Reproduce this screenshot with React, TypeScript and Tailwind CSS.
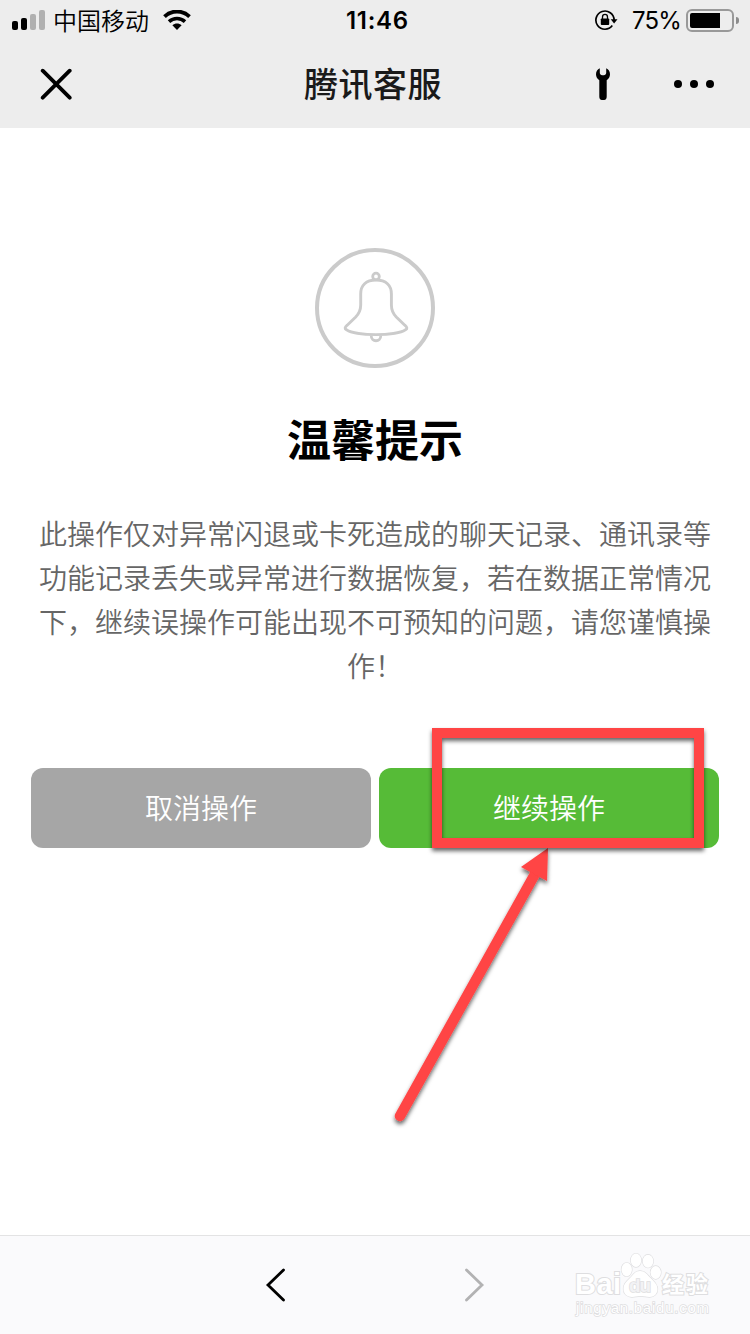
import React from 'react';

const SIGNAL_BARS = [
  { height: 'h-[9px]', color: 'bg-black' },
  { height: 'h-3', color: 'bg-black' },
  { height: 'h-4', color: 'bg-[#b0b0b0]' },
  { height: 'h-5', color: 'bg-[#b0b0b0]' },
];

const WifiIcon: React.FC = () => (
  <svg className="ml-3.5 h-5 w-7" viewBox="0 0 28 20" fill="none">
    <path d="M1.5 6.6C8.4-.2 19.6-.2 26.5 6.6" stroke="#000" strokeWidth="3.8" />
    <path d="M6 11.6c4.5-4.1 11.5-4.1 16 0" stroke="#000" strokeWidth="3.6" />
    <path d="M9.4 15.3c2.6-2.5 6.6-2.5 9.2 0L14 20z" fill="#000" />
  </svg>
);

const RotationLockIcon: React.FC = () => (
  <svg className="h-[22px] w-6" viewBox="0 0 24 22">
    <path d="M18.3 16.6A9.1 9.1 0 1 1 20.1 11" fill="none" stroke="#000" strokeWidth="1.7" />
    <path d="M16.7 10.2h6.8L20.1 14.4z" fill="#000" />
    <path d="M8.5 10V8a2.5 2.6 0 0 1 5 0v2" fill="none" stroke="#000" strokeWidth="1.3" />
    <rect x="6.8" y="9.4" width="8.4" height="6.500" rx="0.9" fill="#000" />
  </svg>
);

const StatusBar: React.FC = () => (
  <div className="flex h-10 items-center text-black">
    <div className="flex w-[346px] items-center pl-3">
      <div className="flex h-5 items-end gap-[3px]">
        {SIGNAL_BARS.map((bar) => (
          <span key={bar.height} className={`w-1.5 rounded-[2px] ${bar.height} ${bar.color}`} />
        ))}
      </div>
      <span className="ml-2 text-2xl font-[350] leading-10">中国移动</span>
      <WifiIcon />
    </div>
    <span className="w-[248px] pt-px font-['Inter'] text-[24px] font-semibold leading-10 tracking-[0.7px]">11:46</span>
    <RotationLockIcon />
    <span className="ml-3.5 w-[54px] whitespace-nowrap pt-px font-['Inter'] text-[24px] leading-10 tracking-[-0.9px]">
      75%
    </span>
    <div className="flex h-[23px] w-12 items-center rounded-[6px] border-2 border-[#999] pl-0.5">
      <div className="h-[15px] w-[30px] rounded-l-[2px] bg-black" />
    </div>
    <div className="ml-0.5 h-[7px] w-[3px] rounded-r-full bg-[#8c8c8c]" />
  </div>
);

const NavBar: React.FC = () => (
  <div className="flex h-[88px] items-center">
    <div className="w-[304px] pl-10">
      <svg className="h-8 w-8" viewBox="0 0 32 32" stroke="#000" strokeWidth="3.800" strokeLinecap="round">
        <path d="M2.700 2.700l27 27M29.700 2.700L2.700 29.700" />
      </svg>
    </div>
    <h1 className="w-[291px] pb-0.5 text-[34px] font-medium leading-[44px] tracking-[0.5px] text-[#1a1a1a]">腾讯客服</h1>
    <svg className="h-8 w-4" viewBox="0 0 16 32">
      <path
        d="M4.800.2v4.600c0 1.400 1.100 2.400 2.300 2.400h1.800c1.200 0 2.300-1 2.300-2.400V.2c2.300 1 3.800 3.200 3.800 6 0 2.500-1.200 4.700-3.300 6v16.200a3.700 3.700 0 0 1-7.400 0V12.200C2.200 10.900 1 8.700 1 6.200c0-2.800 1.500-5 3.800-6z"
        fill="#000"
      />
    </svg>
    <div className="ml-[63px] flex gap-2">
      <span className="h-2 w-2 rounded-full bg-black" />
      <span className="h-2 w-2 rounded-full bg-black" />
      <span className="h-2 w-2 rounded-full bg-black" />
    </div>
  </div>
);

const BellIcon: React.FC = () => (
  <svg className="h-[120px] w-[120px]" viewBox="0 0 120 120" fill="none" stroke="#cbcbcb">
    <circle cx="60" cy="60" r="58" strokeWidth="4" />
    <circle cx="61" cy="28.5" r="3.3" strokeWidth="2.8" />
    <path
      d="M61 32c-10 0-15.3 5.4-15.3 14v11c0 5-1.7 8.600-5 12l-8.500 8.200c-2.400 2.100-2.900 3.500-.5 4.700 4.300 2.900 17.500 4.700 29.300 4.700s25-1.800 29.300-4.700c2.400-1.200 1.900-2.600-.5-4.700L81.300 69c-3.300-3.400-4.900-7-4.900-12V46c0-8.600-5.400-14-15.400-14z"
      strokeWidth="2.9"
    />
    <path d="M56.200 87.500c0 7 9.600 7 9.600 0" strokeWidth="2.8" />
  </svg>
);

/* Red frame and arrow that point at the confirm button */
const Highlight: React.FC = () => (
  <svg
    className="pointer-events-none absolute left-[380px] top-[720px] h-[420px] w-[340px]"
    viewBox="380 720 340 420"
  >
    <defs>
      <filter id="shadow" x="-20%" y="-20%" width="140%" height="140%">
        <feDropShadow dx="0" dy="3" stdDeviation="2" floodColor="#000" floodOpacity="0.6" />
      </filter>
    </defs>
    <g filter="url(#shadow)">
      <path d="M400 1116L535 874" stroke="#ff4444" strokeWidth="10.500" strokeLinecap="round" />
      <path d="M548 848L521 867l26 14z" fill="#ff4444" />
    </g>
    <rect x="437" y="733" width="262" height="110" fill="none" stroke="#ff4444" strokeWidth="10" filter="url(#shadow)" />
  </svg>
);

const Watermark: React.FC = () => (
  <svg
    className="pointer-events-none absolute bottom-0 left-[570px] h-[84px] w-[150px]"
    viewBox="570 1250 150 84"
    fill="#fff"
    stroke="#dedee0"
    strokeWidth="2"
    paintOrder="stroke"
  >
    <text x="575" y="1294" fontFamily="Liberation Sans, sans-serif" fontSize="29" fontWeight="700" textLength="46">
      Bai
    </text>
    <ellipse cx="626.700" cy="1269.500" rx="5.200" ry="6.700" strokeWidth="1.300" />
    <ellipse cx="636" cy="1260.300" rx="5.200" ry="6.700" strokeWidth="1.300" />
    <ellipse cx="648" cy="1261.200" rx="5.200" ry="6.500" strokeWidth="1.300" />
    <ellipse cx="655.700" cy="1272.500" rx="5.200" ry="6.500" strokeWidth="1.300" />
    <path
      d="M640 1271c-5 0-6.500 3.500-10 7-4 4-6.500 6-6.500 11 0 5 4 8 8.500 8 3 0 5-1 8.500-1s6 1 9 1c4.500 0 8-3 8-8 0-4.500-3-7-6.500-10.500-4-4-6-7.500-11-7.500z"
      strokeWidth="1.300"
    />
    <text
      x="629"
      y="1292"
      fontFamily="Liberation Sans, sans-serif"
      fontSize="19"
      fontWeight="700"
      textLength="22"
      fill="#f2f2f4"
      strokeWidth="1.500"
    >
      du
    </text>
    <text x="662" y="1292" fontFamily="Noto Sans CJK SC, sans-serif" fontSize="22" fontWeight="700" textLength="46">
      经验
    </text>
    <text x="576" y="1313" fontFamily="Liberation Sans, sans-serif" fontSize="15" textLength="133" strokeWidth="1.500">
      jingyan.baidu.com
    </text>
  </svg>
);

export default function App() {
  return (
    <div className="relative flex h-[1334px] w-[750px] flex-col overflow-hidden bg-white font-['Noto_Sans_CJK_SC',sans-serif]">
      <header className="bg-[#ededed]">
        <StatusBar />
        <NavBar />
      </header>

      <main className="flex flex-1 flex-col items-center pt-[120px]">
        <BellIcon />
        <h2 className="mt-[38px] text-[44px] font-bold leading-[64px] text-black">温馨提示</h2>
        <p className="mt-[41px] w-[672px] text-center text-[28px] font-[350] leading-[44px] text-[#666]">
          此操作仅对异常闪退或卡死造成的聊天记录、通讯录等
          <br />
          功能记录丢失或异常进行数据恢复，若在数据正常情况
          <br />
          下，继续误操作可能出现不可预知的问题，请您谨慎操
          <br />
          作！
        </p>
        <div className="mt-[81px] flex gap-2 text-[28px] font-[350] text-white">
          <button className="h-20 w-[340px] rounded-xl bg-[#a6a6a6] pb-0.5">取消操作</button>
          <button className="h-20 w-[340px] rounded-xl bg-[#56bb37] pb-0.5">继续操作</button>
        </div>
      </main>

      <footer className="flex h-[99px] items-center justify-center gap-[180px] border-t border-[#e3e3e4] bg-[#fafafc]">
        <svg className="h-[34px] w-5" viewBox="0 0 20 34" fill="none" stroke="#000" strokeWidth="2.800" strokeLinecap="round">
          <path d="M18.500 2L3 17l15.500 15" />
        </svg>
        <svg className="h-[34px] w-5" viewBox="0 0 20 34" fill="none" stroke="#b2b2b3" strokeWidth="2.800" strokeLinecap="round">
          <path d="M1.500 2L17 17 1.500 32" />
        </svg>
      </footer>

      <Highlight />
      <Watermark />
    </div>
  );
}
